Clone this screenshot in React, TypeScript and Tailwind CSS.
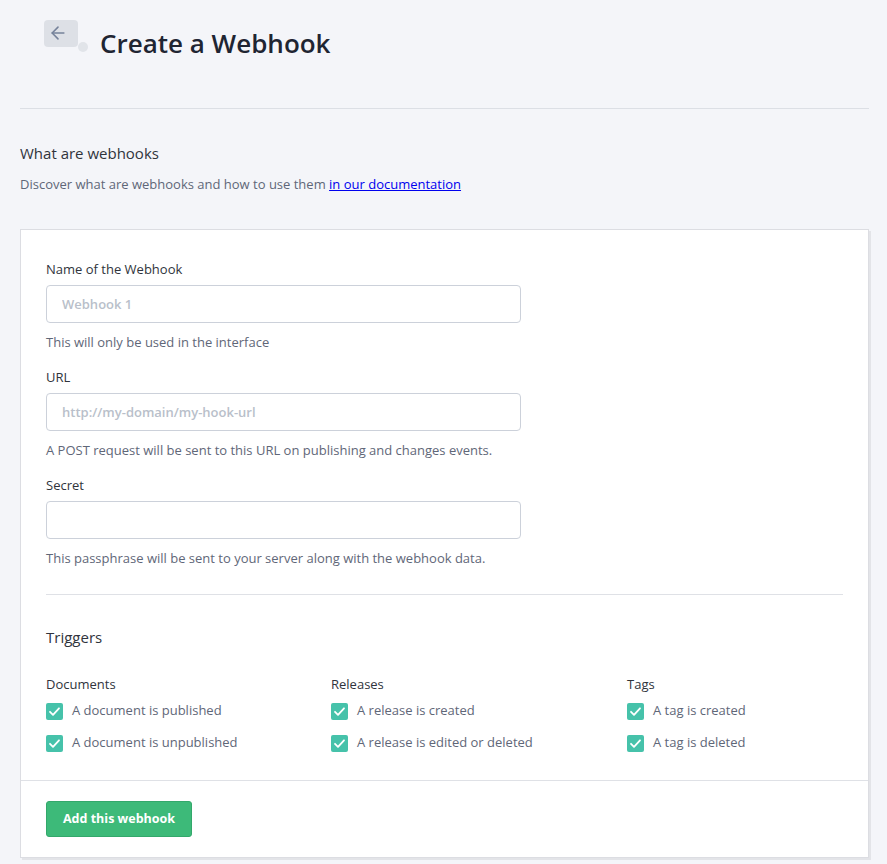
import { ArrowLeft } from "lucide-react";

const TRIGGERS: { title: string; items: string[] }[] = [
  { title: "Documents", items: ["A document is published", "A document is unpublished"] },
  { title: "Releases", items: ["A release is created", "A release is edited or deleted"] },
  { title: "Tags", items: ["A tag is created", "A tag is deleted"] },
];

function Field({
  label,
  placeholder,
  help,
}: {
  label: string;
  placeholder?: string;
  help: string;
}) {
  return (
    <div>
      <label className="block text-[13px] leading-[18px] text-[#30343c]">{label}</label>
      <input
        placeholder={placeholder}
        className="mt-[7px] block h-[38px] w-[475px] rounded-[4px] border border-[#ccd1da] bg-white px-[15px] text-[13px] font-semibold text-[#30343c] outline-none placeholder:text-[#b9bfca]"
      />
      <p className="mt-[10px] text-[13px] leading-[18px] text-[#5f6778]">{help}</p>
    </div>
  );
}

function Check({ label }: { label: string }) {
  return (
    <div className="flex h-[32px] items-center gap-[9px]">
      <span className="flex h-[17px] w-[17px] items-center justify-center rounded-[2px] bg-[#46c2aa]">
        <svg width="13" height="13" viewBox="0 0 13 13" fill="none">
          <path d="M2 6.8l3 3L11 3.3" stroke="white" strokeWidth="1.8" strokeLinecap="round" strokeLinejoin="round" />
        </svg>
      </span>
      <span className="text-[13px] text-[#5f6778]">{label}</span>
    </div>
  );
}

export default function App() {
  return (
    <div className="min-h-[864px] bg-[#f4f5f9] pl-[20px] pr-[18px] pb-[7px] font-['Open_Sans',sans-serif]">
      {/* Header */}
      <div className="flex h-[109px] items-start border-b border-[#dcdfe5] pt-[20px]">
        <div className="relative ml-[24px]">
          <button className="flex h-[27px] w-[34px] items-center justify-center rounded-[4px] bg-[#dde0e6] text-[#76829a]">
            <ArrowLeft size={20} strokeWidth={1.9} className="-ml-[6px] -mt-[2px]" />
          </button>
          <span className="absolute left-[34px] top-[22px] h-[10px] w-[10px] rounded-full bg-[#e1e4e9]" />
        </div>
        <h1 className="ml-[22px] mt-[7px] text-[26px] font-semibold leading-[32px] text-[#1f2532]">
          Create a Webhook
        </h1>
      </div>

      {/* Intro */}
      <div className="pt-[33px]">
        <h2 className="text-[15px] leading-[22px] text-[#30343c]">What are webhooks</h2>
        <p className="mt-[11px] text-[13px] leading-[18px] text-[#5f6778]">
          Discover what are webhooks and how to use them{" "}
          <a href="#" className="text-[#0000ee] underline">
            in our documentation
          </a>
        </p>
      </div>

      {/* Card */}
      <div className="mt-[36px] border border-[#dcdde2] bg-white shadow-[2px_2px_0_#e3e4e8]">
        <div className="px-[25px] pt-[30px]">
          <div className="flex flex-col gap-[17px] pb-[27px]">
            <Field label="Name of the Webhook" placeholder="Webhook 1" help="This will only be used in the interface" />
            <Field
              label="URL"
              placeholder="http://my-domain/my-hook-url"
              help="A POST request will be sent to this URL on publishing and changes events."
            />
            <Field label="Secret" help="This passphrase will be sent to your server along with the webhook data." />
          </div>
          <div className="border-t border-[#dfe1e6] pt-[31px] pb-[21px]">
            <h2 className="text-[15px] leading-[22px] text-[#30343c]">Triggers</h2>
            <div className="mt-[27px] grid grid-cols-[285px_296px_1fr]">
              {TRIGGERS.map((t) => (
                <div key={t.title}>
                  <p className="mb-[2px] text-[13px] leading-[18px] text-[#30343c]">{t.title}</p>
                  {t.items.map((i) => (
                    <Check key={i} label={i} />
                  ))}
                </div>
              ))}
            </div>
          </div>
        </div>
        <div className="border-t border-[#dfe1e6] px-[25px] pt-[20px] pb-[20px]">
          <button className="h-[36px] rounded-[3px] border border-[#33a86b] bg-[#3dba79] px-[16px] text-[12.5px] font-bold text-white">
            Add this webhook
          </button>
        </div>
      </div>
    </div>
  );
}
